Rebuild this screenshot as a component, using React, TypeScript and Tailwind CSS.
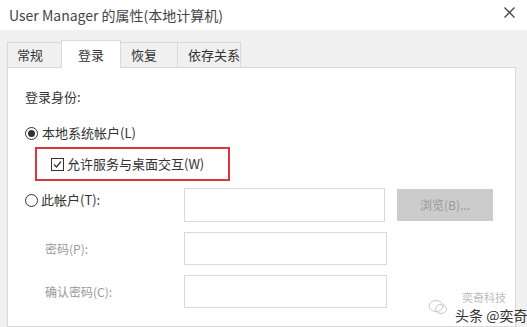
import React from 'react';

const font = { fontFamily: '"Noto Sans CJK SC", "Noto Sans", sans-serif' };

function Radio({ checked }: { checked?: boolean }) {
  return (
    <span className="w-[13px] h-[13px] rounded-full border border-[#333] bg-white flex items-center justify-center shrink-0">
      {checked && <span className="w-[7px] h-[7px] rounded-full bg-[#333]" />}
    </span>
  );
}

export default function App() {
  return (
    <div
      className="w-[527px] h-[327px] bg-white flex flex-col overflow-hidden relative text-[13px] text-[#333]"
      style={font}
    >
      <div className="h-[30px] flex items-center justify-between pl-[9px] pr-[12px] shrink-0">
        <span className="text-[14px] text-[#444]">User Manager 的属性(本地计算机)</span>
        <svg width="11" height="11" viewBox="0 0 11 11" className="mb-[6px]">
          <path d="M0.5 0.5 L10.5 10.5 M10.5 0.5 L0.5 10.5" stroke="#444" strokeWidth="1.3" />
        </svg>
      </div>

      <div className="flex-1 bg-[#f0f0f0] pt-[10px] pl-[7px] pr-[11px] flex flex-col">
        <div className="flex items-end">
          <div className="h-[25px] w-[54px] pl-[9px] flex items-center border border-b-0 border-r-0 border-[#d9d9d9]">常规</div>
          <div className="h-[28px] -mb-px px-[16px] flex items-center bg-white border border-b-0 border-[#d9d9d9] relative z-10">
            登录
          </div>
          <div className="h-[25px] w-[57px] pl-[10px] flex items-center border border-b-0 border-l-0 border-[#d9d9d9]">恢复</div>
          <div className="h-[25px] w-[63px] pl-[10px] flex items-center border border-b-0 border-l-0 border-[#d9d9d9]">依存关系</div>
        </div>

        <div className="flex-1 bg-white border border-[#d9d9d9] pl-[17px] pt-[19px]">
          <div className="h-[20px] flex items-center">登录身份:</div>

          <div className="h-[20px] mt-[16px] flex items-center gap-[4px]">
            <Radio checked />
            <span>本地系统帐户(L)</span>
          </div>

          <div className="mt-[4px] ml-[10px] w-[195px] h-[34px] border-2 border-[#d9363e] flex items-center pl-[14px] gap-[3px]">
            <span className="w-[13px] h-[13px] border border-[#333] flex items-center justify-center bg-white">
              <svg width="11" height="11" viewBox="0 0 11 11">
                <path d="M2 5.5 L4.5 8 L9 2.5" stroke="#333" strokeWidth="1.2" fill="none" />
              </svg>
            </span>
            <span>允许服务与桌面交互(W)</span>
          </div>

          <div className="mt-[7px] flex items-start">
            <div className="w-[159px] h-[24px] flex items-center gap-[3px]">
              <Radio />
              <span>此帐户(T):</span>
            </div>
            <div className="w-[201px] h-[34px] border border-[#d9d9d9]" />
            <div className="ml-[12px] mt-[1px] w-[96px] h-[32px] bg-[#cccccc] flex items-center justify-center text-[#999] text-[12px]">
              浏览(B)...
            </div>
          </div>

          <div className="mt-[10px] flex items-center">
            <div className="w-[159px] pl-[20px] text-[#999] text-[12px]">密码(P):</div>
            <div className="w-[203px] h-[33px] border border-[#d9d9d9]" />
          </div>

          <div className="mt-[10px] flex items-center">
            <div className="w-[159px] pl-[20px] text-[#999] text-[12px]">确认密码(C):</div>
            <div className="w-[203px] h-[33px] border border-[#d9d9d9]" />
          </div>
        </div>
      </div>

      <div className="absolute left-[428px] top-[292px] w-[90px] h-[32px] pointer-events-none">
        <svg width="20" height="16" viewBox="0 0 20 16" className="absolute left-0 top-[7px]">
          <ellipse cx="8" cy="7" rx="7" ry="5.5" stroke="#c8c8c8" strokeWidth="1" fill="none" />
          <ellipse cx="13" cy="10" rx="5.5" ry="4.5" stroke="#c8c8c8" strokeWidth="1" fill="none" />
        </svg>
        <span className="absolute left-[34px] top-0 text-[11px] leading-[11px] text-[#bbb] whitespace-nowrap">奕奇科技</span>
        <span className="absolute left-[27px] top-[15px] text-[14px] text-[#333] leading-[16px] whitespace-nowrap">
          头条 @奕奇
        </span>
      </div>
    </div>
  );
}
